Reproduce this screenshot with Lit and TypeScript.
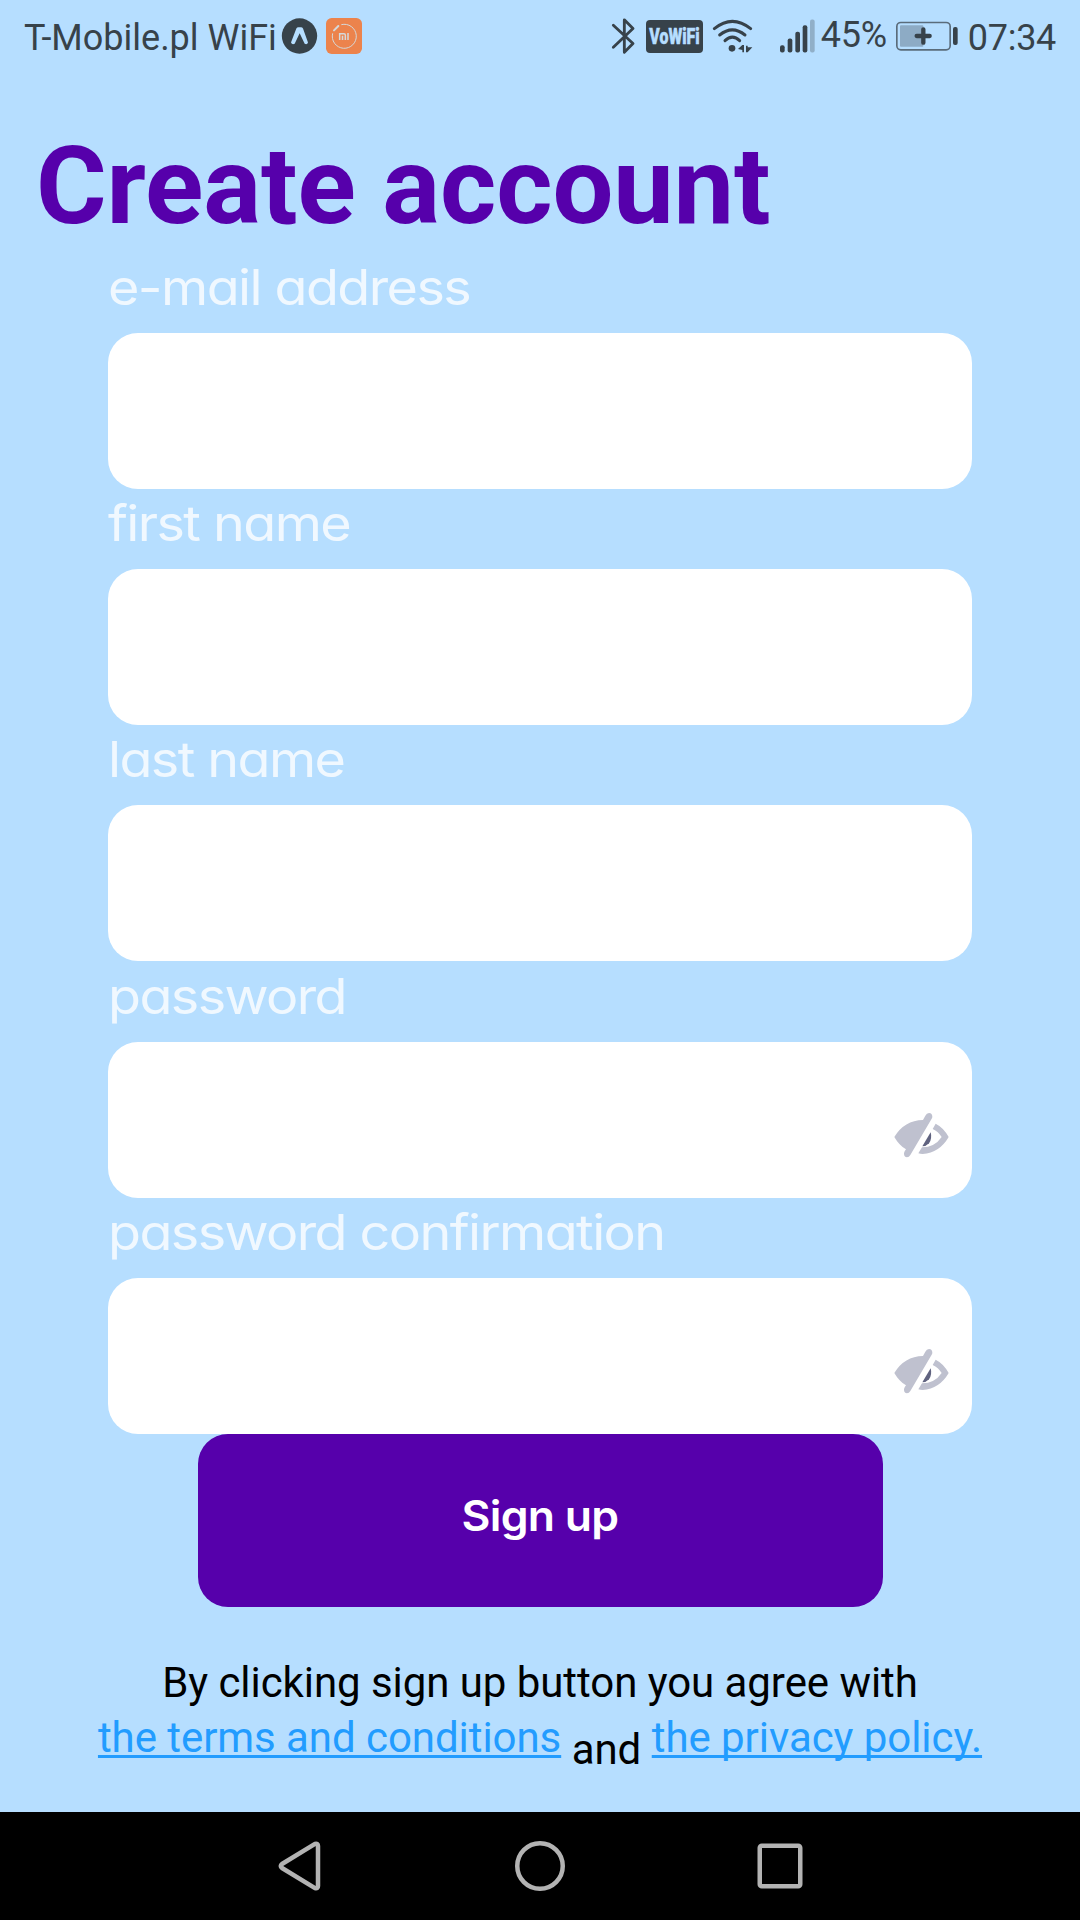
import { LitElement, html, css, nothing } from "lit";
import { customElement, property } from "lit/decorators.js";

@customElement("status-bar")
class StatusBar extends LitElement {
  static styles = css`
    :host {
      display: flex;
      align-items: center;
      height: 72px;
      padding: 0 24px;
      box-sizing: border-box;
      color: #37424a;
      font: 36px/42px Roboto, sans-serif;
      white-space: nowrap;
    }
    svg {
      display: block;
      flex: none;
      overflow: visible;
    }
    .carrier {
      width: 258px;
      padding-top: 4px;
    }
    .mi {
      margin-left: 9px;
    }
    .right {
      display: flex;
      align-items: center;
      margin-left: auto;
    }
    .vowifi {
      margin-left: 12px;
    }
    .wifi {
      margin-left: 9px;
    }
    .signal {
      margin-left: 27px;
    }
    .percent {
      width: 68px;
      margin-left: 6px;
      padding-bottom: 2px;
      letter-spacing: -0.300px;
    }
    .battery {
      margin-left: 7px;
    }
    .time {
      margin-left: 10px;
      padding-top: 4px;
      letter-spacing: -0.300px;
    }
    .badge {
      font: 900 60px Roboto, sans-serif;
    }
  `;

  render() {
    return html`
      <span class="carrier">T-Mobile.pl WiFi</span>
      <svg width="35" height="36" viewBox="846 56 105 107">
        <circle cx="898.500" cy="109.500" r="53" fill="#37424a" />
        <path d="M873 129 L889 87 Q891 83 895 83 H903 Q907 83 909 87 L924 129 Q922 136 914 133 L899 101 L884 133 Q876 137 873 129Z" fill="#b6deff" />
      </svg>
      <svg class="mi" width="36" height="36" viewBox="978 54 108 108">
        <rect x="978" y="54" width="108" height="108" rx="17" fill="#ec834c" />
        <g fill="none" stroke="#d5d9da">
          <path d="M1024 74 A36 36 0 1 1 998 100" stroke-width="3" />
          <path d="M1002 91 L1015 78" stroke-width="6" stroke-linecap="round" />
          <path d="M1019 120 V101 H1032 Q1036 101 1036 106 V120 M1027.500 107 V120 M1044 99 V120" stroke-width="4.500" />
        </g>
      </svg>
      <div class="right">
        <svg width="22" height="36" viewBox="67 55 66 107">
          <path d="M71 76 L130 131 L104 157 V60 L130 86 L71 142" fill="none" stroke="#37424a" stroke-width="8.500" stroke-linejoin="round" stroke-linecap="round" />
        </svg>
        <svg class="vowifi" width="57" height="33" viewBox="168 60 171 99">
          <rect x="168" y="60" width="171" height="99" rx="12" fill="#37424a" />
          <text class="badge" transform="translate(178 132) scale(1 1.130)" textLength="151" lengthAdjust="spacingAndGlyphs" fill="#b6deff" stroke="#b6deff" stroke-width="1.500">VoWiFi</text>
        </svg>
        <svg class="wifi" width="41" height="34" viewBox="366 56 123 102">
          <g fill="none" stroke="#37424a" stroke-width="9" stroke-linecap="round">
            <path d="M373 85 Q427 41 482 85" />
            <path d="M389 104 Q427 73 465 104" />
            <path d="M405 121 Q427 100 449 121" />
          </g>
          <circle cx="426" cy="144" r="10" fill="#37424a" />
          <path d="M444 146 L457 134 H462 V156 H457 V149Z M468 136 H473 V141 H487 L473 156 H468Z" fill="#37424a" />
        </svg>
        <svg class="signal" width="35" height="34" viewBox="568 56 105 101">
          <g fill="#37424a">
            <rect x="568" y="134" width="14" height="22" rx="6" />
            <rect x="591" y="114" width="14" height="42" rx="6" />
            <rect x="614" y="94" width="14" height="62" rx="6" />
            <rect x="636" y="74" width="14" height="82" rx="6" />
            <rect x="658" y="57" width="14" height="99" rx="6" opacity="0.300" />
          </g>
        </svg>
        <span class="percent">45%</span>
        <svg class="battery" width="62" height="30" viewBox="916 61 186 90">
          <rect x="918.500" y="65.500" width="160" height="82" rx="12" fill="none" stroke="#5a6c7b" stroke-width="5" />
          <rect x="928" y="74" width="70" height="64" rx="3" fill="#37424a" opacity="0.320" />
          <path d="M978 106 H1017 M998 86 V126" stroke="#37424a" stroke-width="13" stroke-linecap="round" />
          <rect x="1087" y="79" width="14" height="54" rx="6" fill="#37424a" />
        </svg>
        <span class="time">07:34</span>
      </div>
    `;
  }
}

@customElement("form-field")
class FormField extends LitElement {
  @property() label = "";
  @property({ type: Boolean }) secret = false;

  static styles = css`
    :host {
      display: block;
      height: 236.200px;
    }
    .label {
      display: block;
      height: 80px;
      font: 400 49px/69px Inter, sans-serif;
      font-feature-settings: "cv11";
      letter-spacing: -1.450px;
      transform: scaleX(1.100);
      transform-origin: 0 0;
      color: #f0f8ff;
      white-space: nowrap;
    }
    .box {
      display: flex;
      align-items: flex-end;
      height: 156px;
      box-sizing: border-box;
      padding: 0 23.500px 40px 30px;
      border-radius: 30px;
      background: #fff;
    }
    .input {
      flex: 1;
      min-width: 0;
      height: 76px;
      padding: 0;
      border: 0;
      outline: 0;
      background: transparent;
      font: 42px Roboto, sans-serif;
    }
  `;

  render() {
    return html`
      <label class="label" for="value">${this.label}</label>
      <div class="box">
        <input class="input" id="value" type=${this.secret ? "password" : "text"} />
        ${this.secret
          ? html`<svg width="55" height="45" viewBox="101 98 165 135">
              <path d="M102 170 Q132 120 188 119 L195 106 Q199 98 206 98 Q216 99 216 109 Q216 112 214 115 L150 224 Q146 231 140 231 Q131 230 131 220 Q131 217 133 213 L137 207 Q117 196 102 170Z" fill="#bfc1cf" />
              <path d="M226 130 Q250 142 265 170 Q238 217 187 221 Q180 221 174 219 L185 201 Q223 201 244 170 Q234 154 217 146Z" fill="#bfc1cf" />
              <path d="M211 156 Q216 176 206 189 Q198 198 186 198Z" fill="#5f627f" />
            </svg>`
          : nothing}
      </div>
    `;
  }
}

@customElement("nav-bar")
class NavBar extends LitElement {
  static styles = css`
    :host {
      display: flex;
      align-items: center;
      justify-content: center;
      gap: 190px;
      height: 108px;
      background: #000;
    }
    .icon {
      width: 50px;
      height: 50px;
      fill: none;
      stroke: #b3b3b3;
      stroke-width: 4.500;
      stroke-linejoin: round;
    }
  `;

  render() {
    return html`
      <svg class="icon" viewBox="-2 0 50 50"><path d="M5 23 L38 2.800 Q41 2 41 5 V45 Q41 48 38 47.200 L5 27 Q2.500 25 5 23Z" /></svg>
      <svg class="icon" viewBox="0 0 50 50"><circle cx="25" cy="25" r="22.750" /></svg>
      <svg class="icon" viewBox="0 0 50 50"><rect x="4.750" y="4.750" width="40.500" height="40.500" rx="2" /></svg>
    `;
  }
}

@customElement("app-root")
class AppRoot extends LitElement {
  static styles = css`
    :host {
      display: flex;
      flex-direction: column;
      height: 1920px;
      background: #b6deff;
      font-family: Roboto, sans-serif;
    }
    .title {
      margin: 0;
      padding: 50px 0 0 36px;
      height: 131px;
      font-size: 108px;
      line-height: 128px;
      font-weight: 700;
      letter-spacing: -0.100px;
      color: #5600ab;
    }
    .form {
      padding: 0 108px;
      display: flex;
      flex-direction: column;
    }
    .submit {
      align-self: center;
      width: 685px;
      height: 173px;
      padding: 0 0 9px;
      border: 0;
      border-radius: 30px;
      background: #5600ab;
      color: #fff;
      font: 600 42px/60px Inter, sans-serif;
    }
    .caption {
      display: inline-block;
      letter-spacing: -0.700px;
      transform: scaleX(1.060);
    }
    .legal {
      flex: 1;
      padding-top: 51px;
      font-size: 42px;
      line-height: 49px;
      letter-spacing: -0.060px;
      color: #000;
      text-align: center;
      white-space: nowrap;
    }
    .links {
      display: flex;
      justify-content: center;
      align-items: flex-start;
      gap: 10.500px;
      padding-top: 6px;
    }
    .link {
      color: #229cff;
      text-decoration: underline;
      text-decoration-thickness: 3px;
      text-underline-offset: 3px;
      text-decoration-skip-ink: none;
    }
    .and {
      padding-top: 12px;
    }
  `;

  render() {
    return html`
      <status-bar></status-bar>
      <h1 class="title">Create account</h1>
      <div class="form">
        <form-field label="e-mail address"></form-field>
        <form-field label="first name"></form-field>
        <form-field label="last name"></form-field>
        <form-field label="password" secret></form-field>
        <form-field label="password confirmation" secret></form-field>
        <button class="submit"><span class="caption">Sign up</span></button>
      </div>
      <div class="legal">
        <div>By clicking sign up button you agree with</div>
        <div class="links">
          <a class="link">the terms and conditions</a>
          <span class="and">and</span>
          <a class="link">the privacy policy.</a>
        </div>
      </div>
      <nav-bar></nav-bar>
    `;
  }
}
